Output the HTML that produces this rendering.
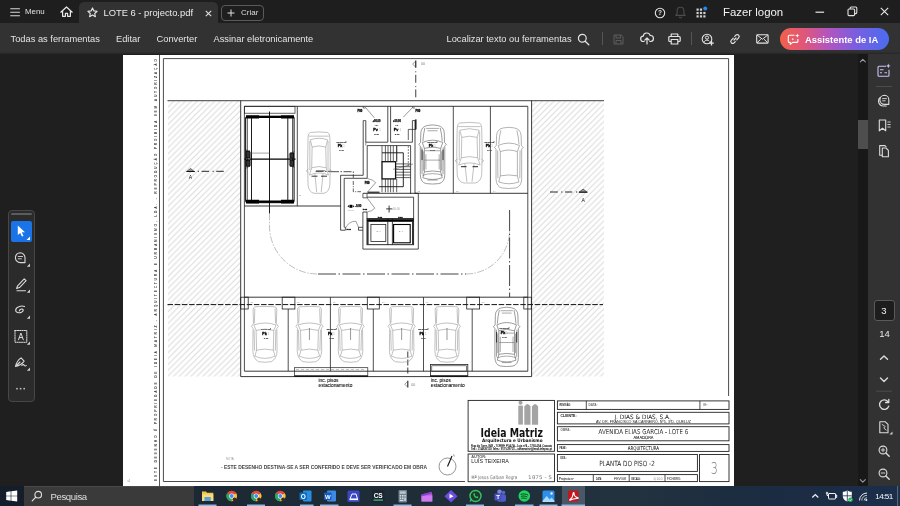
<!DOCTYPE html>
<html lang="pt"><head><meta charset="utf-8"><title>LOTE 6 - projecto.pdf</title>
<style>
*{box-sizing:border-box;margin:0;padding:0}
html,body{width:900px;height:506px;overflow:hidden;background:#1f1f1f;font-family:"Liberation Sans",sans-serif;color:#e6e6e6}
.abs{position:absolute}
#titlebar,#toolbar,#main,#taskbar{will-change:transform}
#titlebar{position:absolute;left:0;top:0;width:900px;height:23px;background:#1e1e1e}
#tab{position:absolute;left:79px;top:2px;width:139px;height:22px;background:#323232;border-radius:5px 5px 0 0}
#toolbar{position:absolute;left:0;top:23px;width:900px;height:31.5px;background:linear-gradient(180deg,#323232 0,#323232 28.5px,#242424 31.5px)}
#toolbar .t{position:absolute;top:10.5px;font-size:9.3px;color:#e4e4e4;white-space:nowrap;line-height:11px}
#main{position:absolute;left:0;top:54px;width:900px;height:432px;background:#1f1f1f}
#taskbar{position:absolute;left:0;top:486px;width:900px;height:20px;background:#1d2b3a}
svg{position:absolute;overflow:visible}
</style></head>
<body>
<div id="titlebar">
  <svg style="left:10px;top:7px" width="11" height="10" viewBox="0 0 11 10"><path d="M0.3 1.7h9.6M0.3 5.2h9.6M0.3 8.8h9.6" stroke="#d8d8d8" stroke-width="1.1" fill="none"/></svg>
  <div class="abs" style="left:25px;top:7.2px;font-size:7.9px;line-height:10px;color:#e0e0e0">Menu</div>
  <svg style="left:60px;top:6.4px" width="13" height="12" viewBox="0 0 13 12"><path d="M0.8 6.2L6.5 1l5.7 5.2M2.6 5v5.3h2.8V7.4h2.2v2.9h2.8V5" stroke="#e8e8e8" stroke-width="1.2" fill="none" stroke-linejoin="round" stroke-linecap="round"/></svg>
  <div id="tab"></div>
  <svg style="left:87px;top:7px" width="11" height="11" viewBox="0 0 11 11"><path d="M5.5 0.9l1.4 3 3.2.4-2.4 2.2.7 3.2-2.9-1.6-2.9 1.6.7-3.2L0.9 4.3l3.2-.4z" stroke="#e8e8e8" stroke-width="1.1" fill="none" stroke-linejoin="round"/></svg>
  <div class="abs" style="left:103.5px;top:6.5px;font-size:9.37px;line-height:12px;color:#ececec;white-space:nowrap">LOTE 6 - projecto.pdf</div>
  <svg style="left:204.5px;top:9.5px" width="7" height="7" viewBox="0 0 7 7"><path d="M0.8 0.8l5.4 5.4M6.2 0.8L0.8 6.2" stroke="#e0e0e0" stroke-width="1.1" fill="none"/></svg>
  <div class="abs" style="left:221px;top:5px;width:42.5px;height:15.5px;border:1px solid #5a5a5a;border-radius:4px"></div>
  <svg style="left:227px;top:9px" width="8" height="8" viewBox="0 0 8 8"><path d="M4 0.5v7M0.5 4h7" stroke="#e0e0e0" stroke-width="1" fill="none"/></svg>
  <div class="abs" style="left:241px;top:7.5px;font-size:8px;line-height:10px;color:#dcdcdc;white-space:nowrap">Criar</div>
  <!-- right icons -->
  <svg style="left:653.5px;top:6.5px" width="12" height="12" viewBox="0 0 12 12"><circle cx="6" cy="6" r="4.7" stroke="#e4e4e4" stroke-width="1.1" fill="none"/><text x="6" y="8.4" font-size="6.5" font-weight="bold" fill="#e4e4e4" text-anchor="middle" font-family="Liberation Sans, sans-serif">?</text></svg>
  <svg style="left:675px;top:6px" width="11" height="13" viewBox="0 0 11 13"><path d="M5.5 1.2c-2.2 0-3.4 1.7-3.4 3.8v2.6L1 9.4h9L8.9 7.6V5c0-2.1-1.2-3.8-3.4-3.800zM4.300 10.800a1.200 1.200 0 0 0 2.400 0" stroke="#4c4c4c" stroke-width="1.1" fill="none"/></svg>
  <svg style="left:696px;top:6px" width="12" height="12" viewBox="0 0 12 12"><g fill="#cfcfcf"><rect x="0.500" y="2.500" width="2.200" height="2.200"/><rect x="3.900" y="2.500" width="2.200" height="2.200"/><rect x="0.500" y="5.900" width="2.200" height="2.200"/><rect x="3.900" y="5.900" width="2.200" height="2.200"/><rect x="7.300" y="5.900" width="2.200" height="2.200"/><rect x="0.500" y="9.300" width="2.200" height="2.200"/><rect x="3.900" y="9.300" width="2.200" height="2.200"/><rect x="7.300" y="9.300" width="2.200" height="2.200"/></g><circle cx="9.2" cy="2.400" r="2" fill="#2a86f0"/></svg>
  <div class="abs" style="left:723px;top:5px;font-size:11.4px;line-height:14px;color:#f2f2f2;white-space:nowrap">Fazer logon</div>
  <svg style="left:815px;top:10.500px" width="10" height="3" viewBox="0 0 10 3"><path d="M0.500 1.200h8.600" stroke="#e8e8e8" stroke-width="1.200"/></svg>
  <svg style="left:847px;top:5.500px" width="11" height="11" viewBox="0 0 11 11"><rect x="1" y="3" width="6.600" height="6.600" rx="1" stroke="#e0e0e0" stroke-width="1.100" fill="none"/><path d="M3.200 3V2a1 1 0 0 1 1-1h4.600a1 1 0 0 1 1 1v4.600a1 1 0 0 1-1 1h-1" stroke="#e0e0e0" stroke-width="1.100" fill="none"/></svg>
  <svg style="left:880px;top:6.500px" width="9" height="9" viewBox="0 0 9 9"><path d="M0.800 0.800l7.400 7.400M8.200 0.800L0.800 8.200" stroke="#e8e8e8" stroke-width="1.100" fill="none"/></svg>
</div>
<div id="toolbar">
  <div class="t" style="left:10.500px">Todas as ferramentas</div>
  <div class="t" style="left:116px">Editar</div>
  <div class="t" style="left:156.500px">Converter</div>
  <div class="t" style="left:213.500px">Assinar eletronicamente</div>
  <div class="t" style="left:446.500px">Localizar texto ou ferramentas</div>
  <svg style="left:577px;top:10px" width="13" height="13" viewBox="0 0 13 13"><circle cx="5.300" cy="5.300" r="3.900" stroke="#e4e4e4" stroke-width="1.200" fill="none"/><path d="M8.200 8.200l3.600 3.600" stroke="#e4e4e4" stroke-width="1.300" stroke-linecap="round"/></svg>
  <div class="abs" style="left:601.500px;top:9px;width:1px;height:13px;background:#555"></div>
  <svg style="left:613px;top:10.500px" width="11" height="11" viewBox="0 0 11 11"><path d="M1 1h7.200L10 2.800V10H1zM3 1v3h4.500V1M3 10V6.500h5V10" stroke="#5c5c5c" stroke-width="1" fill="none" stroke-linejoin="round"/></svg>
  <svg style="left:640px;top:9px" width="14" height="13" viewBox="0 0 14 13"><path d="M4.200 9.500H3.500a2.700 2.700 0 0 1-.3-5.400A3.600 3.600 0 0 1 10.200 3.500a3 3 0 0 1 .5 6H9.800" stroke="#e4e4e4" stroke-width="1.200" fill="none" stroke-linecap="round"/><path d="M7 12V6.200M4.800 8.200L7 6l2.200 2.200" stroke="#e4e4e4" stroke-width="1.200" fill="none" stroke-linecap="round" stroke-linejoin="round"/></svg>
  <svg style="left:667.500px;top:9.500px" width="13" height="12" viewBox="0 0 13 12"><path d="M3.200 3.500V1h6.600v2.500M3.200 8.500H1.800a1 1 0 0 1-1-1V4.500a1 1 0 0 1 1-1h9.400a1 1 0 0 1 1 1v3a1 1 0 0 1-1 1H9.800M3.200 6.500h6.600V11H3.200z" stroke="#e4e4e4" stroke-width="1.200" fill="none" stroke-linejoin="round"/></svg>
  <div class="abs" style="left:690.500px;top:9px;width:1px;height:13px;background:#555"></div>
  <svg style="left:700.500px;top:9.500px" width="14" height="13" viewBox="0 0 14 13"><circle cx="6" cy="6" r="4.800" stroke="#e4e4e4" stroke-width="1.100" fill="none"/><circle cx="6" cy="4.600" r="1.600" stroke="#e4e4e4" stroke-width="1" fill="none"/><path d="M3.200 9.300c.4-1.500 1.500-2.200 2.800-2.200 1 0 1.800.4 2.300 1" stroke="#e4e4e4" stroke-width="1" fill="none"/><path d="M10.500 8v4.500M8.200 10.200h4.600" stroke="#e4e4e4" stroke-width="1.300"/></svg>
  <svg style="left:729px;top:10px" width="12" height="12" viewBox="0 0 12 12"><path d="M5 7L7 5M4.300 5.200L2.400 7.100a1.900 1.900 0 0 0 2.700 2.700l1.200-1.200M7.700 6.800l1.900-1.900a1.900 1.900 0 0 0-2.700-2.700L5.700 3.400" stroke="#e4e4e4" stroke-width="1.200" fill="none" stroke-linecap="round"/></svg>
  <svg style="left:756px;top:11px" width="13" height="10" viewBox="0 0 13 10"><rect x="0.700" y="0.700" width="11.400" height="8.400" rx="0.800" stroke="#e4e4e4" stroke-width="1.100" fill="none"/><path d="M1 1l5.400 4.200L11.800 1M1 8.800l3.800-3.600M11.800 8.800L8 5.200" stroke="#e4e4e4" stroke-width="1" fill="none"/></svg>
  <div class="abs" style="left:780px;top:5px;width:108.500px;height:22px;border-radius:11px;background:linear-gradient(90deg,#f2604a 0%,#e0567a 22%,#b055c0 45%,#7a5ee0 70%,#4a6cf0 100%)"></div>
  <svg style="left:787px;top:9.500px" width="13" height="13" viewBox="0 0 13 13"><path d="M7.500 2.200H2.500a1.200 1.200 0 0 0-1.200 1.200v4.800a1.200 1.200 0 0 0 1.200 1.200h.8v2l2.400-2h4a1.200 1.200 0 0 0 1.200-1.200V6" stroke="#fff" stroke-width="1.100" fill="none" stroke-linejoin="round"/><path d="M10.300 0.600l.6 1.500 1.500.6-1.500.6-.6 1.500-.6-1.500-1.500-.6 1.500-.6z" fill="#fff"/><path d="M5.800 4.800l.4 1 .9.400-.9.400-.4 1-.4-1-.9-.4.900-.4z" fill="#fff"/></svg>
  <div class="abs" style="left:805px;top:10.500px;font-size:9.42px;line-height:11px;font-weight:bold;color:#fff;white-space:nowrap">Assistente de IA</div>
</div>
<div id="main">
<!--PAGE_START-->
<svg style="left:123px;top:1px;overflow:hidden" width="611" height="431" viewBox="123 55 611 431">
<defs><pattern id="hat" width="5.85" height="5.85" patternUnits="userSpaceOnUse"><path d="M-1 6.850L6.850 -1M-1 1L1 -1M4.850 6.850L6.850 4.850" stroke="#dcdcdc" stroke-width="1.100"/></pattern></defs>
<rect x="123" y="55" width="611" height="431" fill="#fff"/>
<rect x="168" y="101" width="72.500" height="275.500" fill="url(#hat)"/>
<rect x="532" y="101" width="72" height="275.500" fill="url(#hat)"/>
<path d="M159.5 55L159.5 486" stroke="#444" stroke-width="0.9" />
<path d="M465 481.5L163.4 481.5L163.4 58.6L728.6 58.6L728.6 396" stroke="#4a4a4a" stroke-width="1" fill="none" />
<text transform="translate(157.300 481) rotate(-90)" font-size="3.400" font-weight="bold" fill="#3a3a3a" font-family="Liberation Sans, sans-serif" textLength="422" lengthAdjust="spacing">ESTE DESENHO É PROPRIEDADE DE IDEIA MATRIZ - ARQUITECTURA E URBANISMO, LDA. - REPRODUÇÃO PROIBIDA SEM AUTORIZAÇÃO</text>
<text x="127.5" y="481.5" font-size="2.6" fill="#777" text-anchor="start" font-weight="normal" font-family="Liberation Sans, sans-serif" >v1</text>
<path d="M415.75 60.4L415.75 67.8" stroke="#222" stroke-width="1.2" />
<path d="M415.300 61.300l-2.600 2.800 2.600 2.800" stroke="#555" stroke-width="0.600" fill="none"/>
<text x="420.9" y="65.3" font-size="3.6" fill="#777" text-anchor="start" font-weight="normal" font-family="Liberation Sans, sans-serif" >00</text>
<path d="M415.750 71.300v1M415.750 74.800v7.900M415.750 86.100v1M415.750 89.400v7.900" stroke="#333" stroke-width="0.950"/>
<path d="M167.5 100.6L604 100.6" stroke="#666" stroke-width="1.3" />
<path d="M240.7 100.6L240.7 376.6L531.6 376.6L531.6 100.6" stroke="#222" stroke-width="0.9" fill="none" />
<path d="M244.4 106.3L527.8 106.3" stroke="#222" stroke-width="0.9" />
<path d="M244.4 106.3L244.4 371.2" stroke="#222" stroke-width="0.8" />
<path d="M527.8 106.3L527.8 371.2" stroke="#222" stroke-width="0.8" />
<path d="M244.4 371.2L527.8 371.2" stroke="#222" stroke-width="0.9" />
<rect x="244.6" y="106.3" width="50.4" height="6.9" stroke="#222" stroke-width="0.7" fill="none" />
<rect x="245.600" y="116.400" width="48.500" height="86.300" rx="1.500" stroke="#111" stroke-width="1" fill="none"/>
<path d="M246 115.300h13v0.500h22v-0.500h13v3.300h-13v-0.600h-22v0.600h-13z" fill="#000"/>
<path d="M246 199.800h13v0.700h22v-0.700h13v3.600h-13v-0.600h-22v0.600h-13z" fill="#000"/>
<path d="M251.5 118L251.5 200.5" stroke="#111" stroke-width="0.95" />
<path d="M287.8 118L287.8 200.5" stroke="#111" stroke-width="0.95" />
<path d="M247.3 118L247.3 200.5" stroke="#222" stroke-width="0.8" />
<path d="M292.6 118L292.6 200.5" stroke="#222" stroke-width="0.8" />
<path d="M269.5 111.5L269.5 213.5" stroke="#000" stroke-width="0.9" />
<path d="M244.5 159.1L295.5 159.1" stroke="#000" stroke-width="1.3" />
<path d="M251.5 153.1L269.5 153.1" stroke="#666" stroke-width="0.6" />
<g stroke="#000" stroke-width="0.800" fill="#333"><rect x="246.300" y="151" width="3.400" height="6.800"/><rect x="246.300" y="160.400" width="3.400" height="5.800"/><rect x="290.200" y="153" width="3.400" height="5.200"/><rect x="290.200" y="160.200" width="3.400" height="6"/></g>
<path d="M245.600 149.500l5 3v13l-5 3M294.200 151.500l-5 2.500v11l5 2.500" stroke="#222" stroke-width="0.600" fill="none"/>
<path d="M297.3 106.3L297.3 206" stroke="#222" stroke-width="0.8" />
<path d="M244.4 206L341 206" stroke="#222" stroke-width="0.9" />
<text x="299" y="195.5" font-size="2.2" fill="#888" text-anchor="start" font-weight="normal" font-family="Liberation Sans, sans-serif" >11</text>
<path d="M269.500 213.300V226A48 48 0 0 0 317.500 274" stroke="#8a8a8a" stroke-width="0.550" fill="none" stroke-dasharray="7 1.500 1.500 1.500"/>
<path d="M318 274H466" stroke="#222" stroke-width="0.850" fill="none" stroke-dasharray="18 2.500 1.500 2.500"/>
<path d="M466 274A43.600 43.600 0 0 0 509.600 230.400" stroke="#8a8a8a" stroke-width="0.550" fill="none" stroke-dasharray="7 1.500 1.500 1.500"/>
<path d="M509.6 210L509.6 297" stroke="#222" stroke-width="0.85" stroke-dasharray="21 2.500 1.500 2.500"/>
<path d="M453.3 106.3L453.3 193.3" stroke="#222" stroke-width="0.8" />
<path d="M490.4 106.3L490.4 193.3" stroke="#222" stroke-width="0.8" />
<path d="M415 193.3L527.8 193.3" stroke="#222" stroke-width="0.9" fill="none" />
<path d="M415 120.6L415 194" stroke="#222" stroke-width="0.8" />
<text x="417.5" y="192" font-size="2.2" fill="#888" text-anchor="start" font-weight="normal" font-family="Liberation Sans, sans-serif" >12</text>
<text x="456" y="192" font-size="2.2" fill="#888" text-anchor="start" font-weight="normal" font-family="Liberation Sans, sans-serif" >13</text>
<text x="493" y="192" font-size="2.2" fill="#888" text-anchor="start" font-weight="normal" font-family="Liberation Sans, sans-serif" >14</text>
<path d="M363.2 120.6L363.2 175.3L340.6 175.3L340.6 230.2" stroke="#222" stroke-width="0.8" fill="none" />
<path d="M365.8 120.6L365.8 142.2L387.8 142.2L387.8 106.3" stroke="#222" stroke-width="0.8" fill="none" />
<path d="M363.2 120.6L365.8 120.6" stroke="#222" stroke-width="0.7" />
<path d="M390.6 106.3L390.6 142.2L412.4 142.2L412.4 120.6L415 120.6" stroke="#222" stroke-width="0.8" fill="none" />
<path d="M363.2 106.3L363.2 108L365.5 108" stroke="#222" stroke-width="0.6" fill="none" />
<path d="M365.3 107.2L374.4 117.8" stroke="#555" stroke-width="0.6" />
<path d="M412.8 106.3L412.8 108L415 108" stroke="#222" stroke-width="0.6" fill="none" />
<path d="M412.8 107.2L403.3 117.2" stroke="#555" stroke-width="0.6" />
<text x="357.5" y="111.6" font-size="2.7" fill="#111" text-anchor="start" font-weight="bold" font-family="Liberation Sans, sans-serif" stroke="#111" stroke-width="0.3" >P00</text>
<text x="415.5" y="111.6" font-size="2.7" fill="#111" text-anchor="start" font-weight="bold" font-family="Liberation Sans, sans-serif" stroke="#111" stroke-width="0.3" >P00</text>
<rect x="415.100" y="119.400" width="1.400" height="10" fill="#111"/>
<path d="M416 129.4L408.3 129.4L408.3 140" stroke="#222" stroke-width="0.7" fill="none" />
<text x="376.5" y="121.5" font-size="2.6" fill="#222" text-anchor="middle" font-weight="bold" font-family="Liberation Sans, sans-serif" stroke="#222" stroke-width="0.25" >+00.00</text>
<text x="376.5" y="125.5" font-size="2.4" fill="#444" text-anchor="middle" font-weight="normal" font-family="Liberation Sans, sans-serif" stroke="#444" stroke-width="0.15" >I.S.</text>
<text x="375.5" y="130.5" font-size="3.8" fill="#000" text-anchor="middle" font-weight="bold" font-family="Liberation Sans, sans-serif" stroke="#000" stroke-width="0.3" >Pv</text>
<text x="380.0" y="130.5" font-size="2.6" fill="#999" text-anchor="middle" font-weight="normal" font-family="Liberation Sans, sans-serif" >1</text>
<text x="376.5" y="135.0" font-size="2.3" fill="#333" text-anchor="middle" font-weight="normal" font-family="Liberation Sans, sans-serif" stroke="#333" stroke-width="0.2" >2.40</text>
<text x="397" y="121.5" font-size="2.6" fill="#222" text-anchor="middle" font-weight="bold" font-family="Liberation Sans, sans-serif" stroke="#222" stroke-width="0.25" >+00.00</text>
<text x="397" y="125.5" font-size="2.4" fill="#444" text-anchor="middle" font-weight="normal" font-family="Liberation Sans, sans-serif" stroke="#444" stroke-width="0.15" >I.S.</text>
<text x="396" y="130.5" font-size="3.8" fill="#000" text-anchor="middle" font-weight="bold" font-family="Liberation Sans, sans-serif" stroke="#000" stroke-width="0.3" >Pv</text>
<text x="400.5" y="130.5" font-size="2.6" fill="#999" text-anchor="middle" font-weight="normal" font-family="Liberation Sans, sans-serif" >1</text>
<text x="397" y="135.0" font-size="2.3" fill="#333" text-anchor="middle" font-weight="normal" font-family="Liberation Sans, sans-serif" stroke="#333" stroke-width="0.2" >2.40</text>
<text x="341.5" y="142.6" font-size="2.5" fill="#333" text-anchor="middle" font-weight="normal" font-family="Liberation Sans, sans-serif" stroke="#333" stroke-width="0.2" >00.00 m²</text>
<text x="340.0" y="147.4" font-size="3.6" fill="#000" text-anchor="middle" font-weight="bold" font-family="Liberation Sans, sans-serif" stroke="#000" stroke-width="0.3" >Pk</text>
<text x="344.0" y="147.4" font-size="2.6" fill="#999" text-anchor="middle" font-weight="normal" font-family="Liberation Sans, sans-serif" >1</text>
<text x="341.5" y="151.4" font-size="2.2" fill="#444" text-anchor="middle" font-weight="normal" font-family="Liberation Sans, sans-serif" stroke="#444" stroke-width="0.2" >2.40</text>
<text x="432.5" y="142.6" font-size="2.5" fill="#333" text-anchor="middle" font-weight="normal" font-family="Liberation Sans, sans-serif" stroke="#333" stroke-width="0.2" >00.00 m²</text>
<text x="431.0" y="147.4" font-size="3.6" fill="#000" text-anchor="middle" font-weight="bold" font-family="Liberation Sans, sans-serif" stroke="#000" stroke-width="0.3" >Pk</text>
<text x="435.0" y="147.4" font-size="2.6" fill="#999" text-anchor="middle" font-weight="normal" font-family="Liberation Sans, sans-serif" >1</text>
<text x="432.5" y="151.4" font-size="2.2" fill="#444" text-anchor="middle" font-weight="normal" font-family="Liberation Sans, sans-serif" stroke="#444" stroke-width="0.2" >2.40</text>
<text x="489.5" y="142.6" font-size="2.5" fill="#333" text-anchor="middle" font-weight="normal" font-family="Liberation Sans, sans-serif" stroke="#333" stroke-width="0.2" >00.00 m²</text>
<text x="488.0" y="147.4" font-size="3.6" fill="#000" text-anchor="middle" font-weight="bold" font-family="Liberation Sans, sans-serif" stroke="#000" stroke-width="0.3" >Pk</text>
<text x="492.0" y="147.4" font-size="2.6" fill="#999" text-anchor="middle" font-weight="normal" font-family="Liberation Sans, sans-serif" >1</text>
<text x="489.5" y="151.4" font-size="2.2" fill="#444" text-anchor="middle" font-weight="normal" font-family="Liberation Sans, sans-serif" stroke="#444" stroke-width="0.2" >2.40</text>
<path d="M367.2 178.3L367.2 145.6L410.6 145.6L410.6 194" stroke="#222" stroke-width="0.8" fill="none" />
<path d="M365.8 142.2L365.8 145.6" stroke="#222" stroke-width="0.5" />
<rect x="382" y="161.7" width="13.6" height="17.2" stroke="#111" stroke-width="1.3" fill="none" />
<path d="M382 145.6L382 161.7" stroke="#222" stroke-width="0.7" />
<path d="M382 178.9L382 192.2" stroke="#222" stroke-width="0.7" />
<path d="M385.4 145.6L385.4 161.7" stroke="#222" stroke-width="0.7" />
<path d="M385.4 178.9L385.4 192.2" stroke="#222" stroke-width="0.7" />
<path d="M388 145.6L388 161.7" stroke="#222" stroke-width="0.7" />
<path d="M388 178.9L388 192.2" stroke="#222" stroke-width="0.7" />
<path d="M390.6 145.6L390.6 161.7" stroke="#222" stroke-width="0.7" />
<path d="M390.6 178.9L390.6 192.2" stroke="#222" stroke-width="0.7" />
<path d="M393.3 145.6L393.3 161.7" stroke="#222" stroke-width="0.7" />
<path d="M393.3 178.9L393.3 192.2" stroke="#222" stroke-width="0.7" />
<path d="M396.7 145.6L396.7 161.7" stroke="#222" stroke-width="0.7" />
<path d="M396.7 178.9L396.7 192.2" stroke="#222" stroke-width="0.7" />
<path d="M395.6 163.9L410.6 163.9" stroke="#222" stroke-width="0.7" />
<path d="M395.6 166.7L410.6 166.7" stroke="#222" stroke-width="0.7" />
<path d="M395.6 169.4L410.6 169.4" stroke="#222" stroke-width="0.7" />
<path d="M395.6 172.2L410.6 172.2" stroke="#222" stroke-width="0.7" />
<path d="M395.6 175L410.6 175" stroke="#222" stroke-width="0.7" />
<path d="M395.6 177.6L410.6 177.6" stroke="#222" stroke-width="0.7" />
<path d="M382 152.8L403.3 152.8L403.3 186.7L378.9 186.7" stroke="#111" stroke-width="0.9" fill="none" />
<path d="M396.7 145.6L396.7 161.7" stroke="#222" stroke-width="0.7" />
<path d="M393 169.4L413 164" stroke="#444" stroke-width="0.5" />
<path d="M408.3 146L408.3 166" stroke="#333" stroke-width="0.6" stroke-dasharray="2 1"/>
<path d="M367.2 178.3L344.2 178.3L344.2 227.3" stroke="#222" stroke-width="0.8" fill="none" />
<path d="M331 171.700H353.300V177.800" stroke="#222" stroke-width="0.800" fill="none" stroke-dasharray="8 1.500 1.500 1.500"/>
<path d="M315.6 171.3L331 171.3" stroke="#222" stroke-width="0.9" stroke-dasharray="8 1.500 1.500 1.500"/>
<path d="M353.300 181V191.700H361" stroke="#222" stroke-width="0.700" fill="none" stroke-dasharray="4 1.200 1 1.200"/>
<path d="M375.7 182.6L367.6 192" stroke="#555" stroke-width="0.6" />
<path d="M367.400 178.500Q373 179.500 375.700 182.600" stroke="#555" stroke-width="0.550" fill="none"/>
<text x="364.8" y="183.6" font-size="2.6" fill="#111" text-anchor="start" font-weight="bold" font-family="Liberation Sans, sans-serif" stroke="#111" stroke-width="0.3" >P00</text>
<rect x="367.500" y="191.600" width="12" height="1.300" fill="#333"/>
<path d="M362.9 193.3L362.9 197.8L367 197.8L367 193.3" stroke="#222" stroke-width="0.7" fill="none" />
<path d="M363 193.3L415 193.3" stroke="#222" stroke-width="0.9" />
<path d="M418.3 193.3L418.3 249.1L362.9 249.1L362.9 212L367 212L367 218.6" stroke="#222" stroke-width="0.8" fill="none" />
<path d="M413.6 218.6L413.6 197.2L367 197.2" stroke="#222" stroke-width="0.8" fill="none" />
<path d="M415 193.3L418.3 193.3" stroke="#222" stroke-width="0.9" />
<path d="M367 197.8L374.8 208.2" stroke="#555" stroke-width="0.6" />
<path d="M374.800 208.200Q372 211.500 367 212" stroke="#555" stroke-width="0.550" fill="none"/>
<text x="362.8" y="210" font-size="2.5" fill="#111" text-anchor="start" font-weight="bold" font-family="Liberation Sans, sans-serif" stroke="#111" stroke-width="0.3" >P00</text>
<rect x="367" y="219.200" width="46.600" height="2.600" fill="#000"/>
<rect x="367" y="218.6" width="46.6" height="26.1" stroke="#111" stroke-width="0.9" fill="none" />
<rect x="367" y="222" width="1.600" height="22.500" fill="#333"/><rect x="412" y="222" width="1.600" height="22.500" fill="#333"/>
<path d="M387.8 218.6L387.8 244.7" stroke="#111" stroke-width="0.8" />
<path d="M392.4 218.6L392.4 244.7" stroke="#111" stroke-width="0.8" />
<rect x="370.9" y="224.5" width="14.9" height="17.0" stroke="#222" stroke-width="0.8" fill="none" />
<rect x="393.6" y="224.5" width="16.6" height="18.3" stroke="#000" stroke-width="1.1" fill="none" />
<text x="378.7" y="231.6" font-size="2.5" fill="#8a8a8a" text-anchor="middle" font-weight="normal" font-family="Liberation Sans, sans-serif" >E. F</text>
<text x="401" y="231.6" font-size="2.5" fill="#8a8a8a" text-anchor="middle" font-weight="normal" font-family="Liberation Sans, sans-serif" >E. F</text>
<text x="380" y="217.8" font-size="2.5" fill="#111" text-anchor="middle" font-weight="bold" font-family="Liberation Sans, sans-serif" stroke="#111" stroke-width="0.3" >P00</text>
<text x="400.5" y="217.8" font-size="2.5" fill="#111" text-anchor="middle" font-weight="bold" font-family="Liberation Sans, sans-serif" stroke="#111" stroke-width="0.3" >P00</text>
<path d="M386.2 208.9L392.4 208.9" stroke="#222" stroke-width="0.9" />
<path d="M389.1 205.6L389.1 212.5" stroke="#222" stroke-width="0.9" />
<text x="392.8" y="209.6" font-size="2.8" fill="#999" text-anchor="start" font-weight="normal" font-family="Liberation Sans, sans-serif" >00.00</text>
<path d="M340.6 230.2L345.4 230.2" stroke="#222" stroke-width="0.8" fill="none" />
<path d="M344.4 227.3L345.4 227.3" stroke="#222" stroke-width="0.7" />
<path d="M345.4 227.3L345.4 230.2" stroke="#222" stroke-width="0.7" />
<path d="M362.9 227.3L358.5 227.3L358.5 230.2L362.9 230.2" stroke="#222" stroke-width="0.8" fill="none" />
<path d="M345.400 228.500A10.800 10.800 0 0 1 355.900 221.200" stroke="#555" stroke-width="0.550" fill="none"/>
<path d="M355.9 221.2L358.5 227.3" stroke="#555" stroke-width="0.55" />
<text x="346.5" y="230.2" font-size="2.5" fill="#111" text-anchor="start" font-weight="bold" font-family="Liberation Sans, sans-serif" stroke="#111" stroke-width="0.3" >P00</text>
<path d="M347.400 206.300l1.800-1.300v2.600zM352.700 205v2.600l1.800-1.300z" fill="#111"/><rect x="349.500" y="204.800" width="2.800" height="3" fill="#000"/>
<text x="355" y="207.3" font-size="2.8" fill="#111" text-anchor="start" font-weight="bold" font-family="Liberation Sans, sans-serif" stroke="#111" stroke-width="0.25" >-0.00</text>
<text x="348" y="211.2" font-size="2.3" fill="#888" text-anchor="start" font-weight="normal" font-family="Liberation Sans, sans-serif" >00.00</text>
<path d="M244.4 297.2L527.8 297.2" stroke="#222" stroke-width="0.9" />
<path d="M167.500 304.600H603" stroke="#111" stroke-width="1" stroke-dasharray="5.500 1.700"/>
<rect x="240.7" y="297.2" width="7.5" height="11.8" stroke="#222" stroke-width="0.8" fill="none" />
<rect x="282.2" y="297.2" width="12.7" height="11.8" stroke="#222" stroke-width="0.8" fill="none" />
<rect x="367.3" y="297.2" width="12.0" height="11.8" stroke="#222" stroke-width="0.8" fill="none" />
<rect x="466.7" y="297.2" width="12.9" height="11.8" stroke="#222" stroke-width="0.8" fill="none" />
<rect x="523.8" y="297.2" width="7.5" height="11.8" stroke="#222" stroke-width="0.8" fill="none" />
<path d="M288.2 309L288.2 371.2" stroke="#222" stroke-width="0.8" />
<path d="M330.4 297.2L330.4 371.2" stroke="#222" stroke-width="0.8" />
<path d="M373.3 309L373.3 371.2" stroke="#222" stroke-width="0.8" />
<path d="M423.5 297.2L423.5 371.2" stroke="#222" stroke-width="0.8" />
<path d="M472.2 309L472.2 371.2" stroke="#222" stroke-width="0.8" />
<text x="250.5" y="302.5" font-size="2.2" fill="#888" text-anchor="start" font-weight="normal" font-family="Liberation Sans, sans-serif" >15</text>
<text x="297" y="302.5" font-size="2.2" fill="#888" text-anchor="start" font-weight="normal" font-family="Liberation Sans, sans-serif" >16</text>
<text x="333" y="302.5" font-size="2.2" fill="#888" text-anchor="start" font-weight="normal" font-family="Liberation Sans, sans-serif" >17</text>
<text x="382" y="302.5" font-size="2.2" fill="#888" text-anchor="start" font-weight="normal" font-family="Liberation Sans, sans-serif" >18</text>
<text x="426" y="302.5" font-size="2.2" fill="#888" text-anchor="start" font-weight="normal" font-family="Liberation Sans, sans-serif" >19</text>
<text x="482" y="302.5" font-size="2.2" fill="#888" text-anchor="start" font-weight="normal" font-family="Liberation Sans, sans-serif" >20</text>
<rect x="294.4" y="367.7" width="73.4" height="8.7" stroke="#222" stroke-width="0.7" fill="none" />
<rect x="294.400" y="375.300" width="73.400" height="1.600" fill="#111"/>
<path d="M296 369.500h70" stroke="#888" stroke-width="0.500" stroke-dasharray="3 2"/>
<rect x="430.4" y="364.4" width="37.4" height="11.8" stroke="#222" stroke-width="0.8" fill="none" />
<rect x="431.8" y="365.8" width="34.6" height="5.4" stroke="#222" stroke-width="0.6" fill="none" />
<rect x="430.400" y="375.300" width="37.400" height="1.600" fill="#111"/>
<text x="318.5" y="382.2" font-size="4.8" fill="#111" text-anchor="start" font-weight="normal" font-family="Liberation Sans, sans-serif" stroke="#111" stroke-width="0.08" >inc. pisos</text>
<text x="318.5" y="386.6" font-size="4.8" fill="#111" text-anchor="start" font-weight="normal" font-family="Liberation Sans, sans-serif" stroke="#111" stroke-width="0.08" >estacionamento</text>
<text x="430.8" y="382.2" font-size="4.8" fill="#111" text-anchor="start" font-weight="normal" font-family="Liberation Sans, sans-serif" stroke="#111" stroke-width="0.08" >inc. pisos</text>
<text x="430.8" y="386.6" font-size="4.8" fill="#111" text-anchor="start" font-weight="normal" font-family="Liberation Sans, sans-serif" stroke="#111" stroke-width="0.08" >estacionamento</text>
<text x="266" y="330.3" font-size="2.5" fill="#333" text-anchor="middle" font-weight="normal" font-family="Liberation Sans, sans-serif" stroke="#333" stroke-width="0.2" >00.00 m²</text>
<text x="264.5" y="335.1" font-size="3.6" fill="#000" text-anchor="middle" font-weight="bold" font-family="Liberation Sans, sans-serif" stroke="#000" stroke-width="0.3" >Pk</text>
<text x="268.5" y="335.1" font-size="2.6" fill="#999" text-anchor="middle" font-weight="normal" font-family="Liberation Sans, sans-serif" >1</text>
<text x="266" y="339.1" font-size="2.2" fill="#444" text-anchor="middle" font-weight="normal" font-family="Liberation Sans, sans-serif" stroke="#444" stroke-width="0.2" >2.40</text>
<text x="331.6" y="330.3" font-size="2.5" fill="#333" text-anchor="middle" font-weight="normal" font-family="Liberation Sans, sans-serif" stroke="#333" stroke-width="0.2" >00.00 m²</text>
<text x="330.1" y="335.1" font-size="3.6" fill="#000" text-anchor="middle" font-weight="bold" font-family="Liberation Sans, sans-serif" stroke="#000" stroke-width="0.3" >Pk</text>
<text x="334.1" y="335.1" font-size="2.6" fill="#999" text-anchor="middle" font-weight="normal" font-family="Liberation Sans, sans-serif" >1</text>
<text x="331.6" y="339.1" font-size="2.2" fill="#444" text-anchor="middle" font-weight="normal" font-family="Liberation Sans, sans-serif" stroke="#444" stroke-width="0.2" >2.40</text>
<text x="423.3" y="330.3" font-size="2.5" fill="#333" text-anchor="middle" font-weight="normal" font-family="Liberation Sans, sans-serif" stroke="#333" stroke-width="0.2" >00.00 m²</text>
<text x="421.8" y="335.1" font-size="3.6" fill="#000" text-anchor="middle" font-weight="bold" font-family="Liberation Sans, sans-serif" stroke="#000" stroke-width="0.3" >Pk</text>
<text x="425.8" y="335.1" font-size="2.6" fill="#999" text-anchor="middle" font-weight="normal" font-family="Liberation Sans, sans-serif" >1</text>
<text x="423.3" y="339.1" font-size="2.2" fill="#444" text-anchor="middle" font-weight="normal" font-family="Liberation Sans, sans-serif" stroke="#444" stroke-width="0.2" >2.40</text>
<text x="504.5" y="329" font-size="2.5" fill="#333" text-anchor="middle" font-weight="normal" font-family="Liberation Sans, sans-serif" stroke="#333" stroke-width="0.2" >00.00 m²</text>
<text x="503.0" y="333.8" font-size="3.6" fill="#000" text-anchor="middle" font-weight="bold" font-family="Liberation Sans, sans-serif" stroke="#000" stroke-width="0.3" >Pk</text>
<text x="507.0" y="333.8" font-size="2.6" fill="#999" text-anchor="middle" font-weight="normal" font-family="Liberation Sans, sans-serif" >1</text>
<text x="504.5" y="337.8" font-size="2.2" fill="#444" text-anchor="middle" font-weight="normal" font-family="Liberation Sans, sans-serif" stroke="#444" stroke-width="0.2" >2.40</text>
<path d="M407.8 380.8L407.8 387.6" stroke="#222" stroke-width="1.1" />
<path d="M407.300 381.500l-2.500 2.700 2.500 2.700" stroke="#555" stroke-width="0.600" fill="none"/>
<text x="411.3" y="385.6" font-size="3.6" fill="#777" text-anchor="start" font-weight="normal" font-family="Liberation Sans, sans-serif" >00</text>
<path d="M407.8 351.5L407.8 375" stroke="#222" stroke-width="0.9" stroke-dasharray="6 2"/>
<path d="M186.700 171.500l3.800-3 3.800 3z" stroke="#222" stroke-width="0.600" fill="#999"/>
<path d="M186.5 171.5L194.8 171.5" stroke="#111" stroke-width="1" />
<path d="M197.800 171.300h1.200M201.600 171.300h7.500M212.500 171.300h1.200M216.200 171.300h7.600" stroke="#111" stroke-width="0.900"/>
<text x="190.400" y="178.700" font-size="6" fill="#222" text-anchor="middle" font-family="Liberation Sans, sans-serif" textLength="3.400" lengthAdjust="spacingAndGlyphs">A</text>
<path d="M579 192.200l4.100-3.100 4.100 3.100z" stroke="#222" stroke-width="0.600" fill="#999"/>
<path d="M578.8 192.2L587.4 192.2" stroke="#111" stroke-width="1" />
<path d="M550 192h7.800M561.200 192h1.200M565 192h7.300M576 192h1.200" stroke="#111" stroke-width="0.900"/>
<text x="583.300" y="201.700" font-size="6" fill="#222" text-anchor="middle" font-family="Liberation Sans, sans-serif" textLength="3.400" lengthAdjust="spacingAndGlyphs">A</text>
<g stroke="#8e8e8e" stroke-width="0.55" fill="none" stroke-linejoin="round"><path d="M310.32 132.5Q318.95 131.28 327.58 132.5Q329.85 133.11 329.85 137.36L330.3 162.9L329.85 184.79Q329.17 192.08 323.94 193.3L313.96 193.3Q308.74 192.08 308.05 184.79L307.6 162.9L308.05 137.36Q308.05 133.11 310.32 132.5z"/><path d="M310.32 139.8Q318.95 136.76 327.58 139.8L325.76 147.09Q318.95 144.66 312.14 147.09z"/><path d="M312.14 147.09L311.69 167.76M325.76 147.09L326.21 167.76"/><path d="M309.87 141.01L309.87 170.2M328.03 141.01L328.03 170.2"/><path d="M311.69 167.76Q318.95 165.33 326.21 167.76L328.48 175.06Q318.95 170.8 309.42 175.06z"/><path d="M314.86 173.84L316.68 192.08M323.04 173.84L321.22 192.08"/><path d="M308.96 136.15L328.94 136.15"/><path d="M308.28 168.98L306.24 170.8L308.05 172.63M329.62 168.98L331.66 170.8L329.85 172.63"/></g>
<path d="M311.500 176.200h6M321 176.200h6" stroke="#222" stroke-width="0.900"/><path d="M316 170.800h9" stroke="#444" stroke-width="0.700"/>
<g stroke="#666" stroke-width="0.65" fill="none" stroke-linejoin="round"><path d="M427.45 125.49Q432.55 124.31 437.65 125.49Q444.03 126.66 444.28 133.12L444.54 142.51L446.32 144.27L444.79 146.03L444.79 174.79Q444.54 182.43 438.93 183.6Q432.55 184.48 426.18 183.6Q420.56 182.43 420.31 174.79L420.31 146.03L418.78 144.27L420.56 142.51L420.82 133.12Q421.07 126.66 427.45 125.49z"/><path d="M422.35 142.51Q432.55 137.81 442.75 142.51L440.71 148.38Q432.55 145.44 424.39 148.38z"/><path d="M424.39 148.38L424.39 171.86M440.71 148.38L440.71 171.86M421.84 147.21L422.1 174.21M443.26 147.21L443.0 174.21"/><path d="M424.39 171.86Q432.55 170.1 440.71 171.86L442.24 177.73Q432.55 181.25 422.86 177.73z"/><path d="M424.9 127.84Q423.37 133.71 422.86 141.34M440.2 127.84Q441.73 133.71 442.24 141.34"/><path d="M426.18 128.42L438.93 128.42M427.45 130.77L437.65 130.77M424.9 150.73L440.2 150.73M425.92 154.25L425.92 169.51M439.18 154.25L439.18 169.51M423.37 151.31L423.37 170.69M441.73 151.31L441.73 170.69M422.35 175.38Q432.55 171.86 442.75 175.38M427.45 180.08L437.65 180.08M424.9 160.12L440.2 160.12" stroke="#555" stroke-width="0.500"/><path d="M422.1 149.55L422.1 160.12M443.0 149.55L443.0 160.12" stroke="#222" stroke-width="0.900"/></g>
<g stroke="#8e8e8e" stroke-width="0.55" fill="none" stroke-linejoin="round"><path d="M459.76 123.0Q469.45 121.8 479.14 123.0Q481.69 123.6 481.69 127.8L482.2 153.0L481.69 174.6Q480.93 181.8 475.06 183.0L463.84 183.0Q457.97 181.8 457.21 174.6L456.7 153.0L457.21 127.8Q457.21 123.6 459.76 123.0z"/><path d="M459.76 130.2Q469.45 127.2 479.14 130.2L477.1 137.4Q469.45 135.0 461.8 137.4z"/><path d="M461.8 137.4L461.29 157.8M477.1 137.4L477.61 157.8"/><path d="M459.25 131.4L459.25 160.2M479.65 131.4L479.65 160.2"/><path d="M461.29 157.8Q469.45 155.4 477.61 157.8L480.16 165.0Q469.45 160.8 458.74 165.0z"/><path d="M464.86 163.8L466.9 181.8M474.04 163.8L472.0 181.8"/><path d="M458.23 126.6L480.67 126.6"/><path d="M457.46 159.0L455.17 160.8L457.21 162.6M481.44 159.0L483.73 160.8L481.69 162.6"/></g>
<path d="M461 166.700h5.500M472.500 166.700h5.500" stroke="#222" stroke-width="1"/>
<g stroke="#808080" stroke-width="0.6" fill="none" stroke-linejoin="round"><path d="M503.51 127.91Q508.85 126.69 514.19 127.91Q520.87 129.12 521.13 135.8L521.4 145.51L523.27 147.33L521.67 149.15L521.67 178.89Q521.4 186.79 515.53 188.0Q508.85 188.91 502.18 188.0Q496.3 186.79 496.03 178.89L496.03 149.15L494.43 147.33L496.3 145.51L496.57 135.8Q496.83 129.12 503.51 127.91z"/><path d="M498.17 145.51Q508.85 140.65 519.53 145.51L517.39 151.58Q508.85 148.54 500.31 151.58z"/><path d="M500.31 151.58L500.31 175.86M517.39 151.58L517.39 175.86M497.64 150.37L497.9 178.29M520.06 150.37L519.8 178.29"/><path d="M500.31 175.86Q508.85 174.04 517.39 175.86L519.0 181.93Q508.85 185.57 498.7 181.93z"/><path d="M500.84 130.34Q499.24 136.41 498.7 144.3M516.86 130.34Q518.46 136.41 519.0 144.3"/></g>
<g stroke="#8e8e8e" stroke-width="0.55" fill="none" stroke-linejoin="round"><path d="M254.83 306.8Q264.95 305.98 275.07 306.8Q276.84 307.35 276.84 310.09L276.34 323.27L278.36 326.56L276.84 328.21L277.09 350.72Q276.84 358.95 271.28 361.7Q264.95 362.8 258.62 361.7Q253.06 358.95 252.81 350.72L253.06 328.21L251.54 326.56L253.56 323.27L253.06 310.09Q253.06 307.35 254.83 306.8z"/><path d="M253.82 324.92Q264.95 321.07 276.08 324.92L273.81 330.41Q264.95 327.66 256.1 330.41z"/><path d="M256.1 330.41L256.6 350.17M273.81 330.41L273.3 350.17M254.07 329.86L254.58 350.72M275.83 329.86L275.32 350.72"/><path d="M256.6 350.17Q264.95 347.98 273.3 350.17L275.07 356.21Q264.95 360.6 254.83 356.21z"/><path d="M254.83 308.45L254.32 323.27M275.07 308.45L275.58 323.27"/></g>
<g stroke="#8e8e8e" stroke-width="0.55" fill="none" stroke-linejoin="round"><path d="M299.25 306.8Q309.45 305.98 319.65 306.8Q321.44 307.35 321.44 310.09L320.93 323.27L322.96 326.56L321.44 328.21L321.69 350.72Q321.44 358.95 315.82 361.7Q309.45 362.8 303.07 361.7Q297.46 358.95 297.21 350.72L297.46 328.21L295.94 326.56L297.97 323.27L297.46 310.09Q297.46 307.35 299.25 306.8z"/><path d="M298.23 324.92Q309.45 321.07 320.67 324.92L318.38 330.41Q309.45 327.66 300.52 330.41z"/><path d="M300.52 330.41L301.03 350.17M318.38 330.41L317.87 350.17M298.49 329.86L299.0 350.72M320.41 329.86L319.9 350.72"/><path d="M301.03 350.17Q309.45 347.98 317.87 350.17L319.65 356.21Q309.45 360.6 299.25 356.21z"/><path d="M299.25 308.45L298.74 323.27M319.65 308.45L320.16 323.27"/></g>
<path d="M309.45 328L309.45 340" stroke="#555" stroke-width="0.6" />
<g stroke="#8e8e8e" stroke-width="0.55" fill="none" stroke-linejoin="round"><path d="M340.35 306.8Q350.55 305.98 360.75 306.8Q362.54 307.35 362.54 310.09L362.03 323.27L364.06 326.56L362.54 328.21L362.79 350.72Q362.54 358.95 356.93 361.7Q350.55 362.8 344.18 361.7Q338.56 358.95 338.31 350.72L338.56 328.21L337.04 326.56L339.07 323.27L338.56 310.09Q338.56 307.35 340.35 306.8z"/><path d="M339.33 324.92Q350.55 321.07 361.77 324.92L359.48 330.41Q350.55 327.66 341.62 330.41z"/><path d="M341.62 330.41L342.13 350.17M359.48 330.41L358.97 350.17M339.59 329.86L340.1 350.72M361.51 329.86L361.0 350.72"/><path d="M342.13 350.17Q350.55 347.98 358.97 350.17L360.75 356.21Q350.55 360.6 340.35 356.21z"/><path d="M340.35 308.45L339.84 323.27M360.75 308.45L361.26 323.27"/></g>
<path d="M350.55 328L350.55 340" stroke="#555" stroke-width="0.6" />
<g stroke="#8e8e8e" stroke-width="0.55" fill="none" stroke-linejoin="round"><path d="M391.45 306.8Q401.65 305.98 411.85 306.8Q413.63 307.35 413.63 310.09L413.12 323.27L415.16 326.56L413.63 328.21L413.89 350.72Q413.63 358.95 408.02 361.7Q401.65 362.8 395.27 361.7Q389.66 358.95 389.41 350.72L389.66 328.21L388.13 326.56L390.17 323.27L389.66 310.09Q389.66 307.35 391.45 306.8z"/><path d="M390.43 324.92Q401.65 321.07 412.87 324.92L410.57 330.41Q401.65 327.66 392.72 330.41z"/><path d="M392.72 330.41L393.23 350.17M410.57 330.41L410.06 350.17M390.69 329.86L391.19 350.72M412.61 329.86L412.1 350.72"/><path d="M393.23 350.17Q401.65 347.98 410.06 350.17L411.85 356.21Q401.65 360.6 391.45 356.21z"/><path d="M391.45 308.45L390.94 323.27M411.85 308.45L412.36 323.27"/></g>
<path d="M401.65 328L401.65 340" stroke="#555" stroke-width="0.6" />
<g stroke="#8e8e8e" stroke-width="0.55" fill="none" stroke-linejoin="round"><path d="M436.92 306.8Q447.0 305.98 457.08 306.8Q458.84 307.35 458.84 310.09L458.34 323.27L460.36 326.56L458.84 328.21L459.1 350.72Q458.84 358.95 453.3 361.7Q447.0 362.8 440.7 361.7Q435.16 358.95 434.9 350.72L435.16 328.21L433.64 326.56L435.66 323.27L435.16 310.09Q435.16 307.35 436.92 306.8z"/><path d="M435.91 324.92Q447.0 321.07 458.09 324.92L455.82 330.41Q447.0 327.66 438.18 330.41z"/><path d="M438.18 330.41L438.68 350.17M455.82 330.41L455.32 350.17M436.16 329.86L436.67 350.72M457.84 329.86L457.33 350.72"/><path d="M438.68 350.17Q447.0 347.98 455.32 350.17L457.08 356.21Q447.0 360.6 436.92 356.21z"/><path d="M436.92 308.45L436.42 323.27M457.08 308.45L457.58 323.27"/></g>
<path d="M447.0 328L447.0 340" stroke="#555" stroke-width="0.6" />
<g stroke="#666" stroke-width="0.65" fill="none" stroke-linejoin="round"><path d="M501.75 307.79Q506.65 306.61 511.55 307.79Q517.67 308.97 517.92 315.45L518.16 324.87L519.88 326.64L518.41 328.4L518.41 357.26Q518.16 364.92 512.77 366.1Q506.65 366.98 500.52 366.1Q495.13 364.92 494.89 357.26L494.89 328.4L493.42 326.64L495.13 324.87L495.38 315.45Q495.62 308.97 501.75 307.79z"/><path d="M496.85 324.87Q506.65 320.16 516.45 324.87L514.49 330.76Q506.65 327.81 498.81 330.76z"/><path d="M498.81 330.76L498.81 354.32M514.49 330.76L514.49 354.32M496.36 329.58L496.6 356.68M516.94 329.58L516.69 356.68"/><path d="M498.81 354.32Q506.65 352.55 514.49 354.32L515.96 360.21Q506.65 363.74 497.34 360.21z"/><path d="M499.3 310.14Q497.83 316.03 497.34 323.69M514.0 310.14Q515.47 316.03 515.96 323.69"/><path d="M500.52 310.73L512.77 310.73M501.75 313.09L511.55 313.09M499.3 333.12L514.0 333.12M500.28 336.65L500.28 351.96M513.02 336.65L513.02 351.96M497.83 333.7L497.83 353.14M515.47 333.7L515.47 353.14M496.85 357.85Q506.65 354.32 516.45 357.85M501.75 362.57L511.55 362.57M499.3 342.54L514.0 342.54" stroke="#555" stroke-width="0.500"/><path d="M496.6 331.94L496.6 342.54M516.69 331.94L516.69 342.54" stroke="#222" stroke-width="0.900"/></g>
<text x="226" y="460.3" font-size="2.8" fill="#999" text-anchor="start" font-weight="normal" font-family="Liberation Sans, sans-serif" >NOTA:</text>
<text x="221" y="468.700" font-size="4.900" fill="#444" font-weight="bold" font-family="Liberation Sans, sans-serif" textLength="206" lengthAdjust="spacingAndGlyphs">- ESTE DESENHO DESTINA-SE A SER CONFERIDO E DEVE SER VERIFICADO EM OBRA</text>
<circle cx="447.500" cy="466.500" r="8.500" stroke="#666" stroke-width="0.700" fill="none"/>
<path d="M447.5 466.5L452 456" stroke="#111" stroke-width="1.1" />
<text x="452.5" y="456" font-size="3.2" fill="#777" text-anchor="start" font-weight="normal" font-family="Liberation Sans, sans-serif" transform="rotate(22 452.500 456)">N</text>
<rect x="468.1" y="400.4" width="86.4" height="50.9" stroke="#222" stroke-width="0.9" fill="none" />
<rect x="468.1" y="454" width="86.4" height="27.7" stroke="#222" stroke-width="0.9" fill="none" />
<g fill="#a4a4a4"><circle cx="520.500" cy="402.700" r="2"/><rect x="518.300" y="405.600" width="4.600" height="19"/><path d="M524.300 406.500q3.300-5 6.200 0v18.200h-6.200z"/><path d="M531.900 406.500q3.300-5 6.200 0v18.200h-6.200z"/></g>
<text x="480.500" y="436.500" font-size="12.800" font-weight="bold" fill="#111" font-family="DejaVu Sans Condensed, DejaVu Sans, sans-serif" textLength="62.500" lengthAdjust="spacingAndGlyphs">Ideia Matriz</text>
<text x="482" y="442" font-size="4.700" font-weight="bold" fill="#111" font-family="DejaVu Sans Condensed, DejaVu Sans, sans-serif" textLength="60.500" lengthAdjust="spacingAndGlyphs">Arquitectura e Urbanismo</text>
<text x="471" y="446.700" font-size="2.900" fill="#111" stroke="#111" stroke-width="0.100" font-family="Liberation Sans, sans-serif" textLength="81" lengthAdjust="spacingAndGlyphs">Rua da Torre, 849 - TORRE PLAZA - Loja nº4 - 2750-054 Cascais</text>
<text x="471" y="449.600" font-size="2.900" fill="#111" stroke="#111" stroke-width="0.100" font-family="Liberation Sans, sans-serif" textLength="81" lengthAdjust="spacingAndGlyphs">Telf.: 214826110 Telm.: 917528701 - ideiamatriz@mail.telepac.pt</text>
<text x="471.3" y="457.8" font-size="3" fill="#555" text-anchor="start" font-family="Liberation Sans, sans-serif" font-weight="bold" textLength="15" lengthAdjust="spacingAndGlyphs">AUTOR:</text>
<text x="471.3" y="463.4" font-size="5" fill="#222" text-anchor="start" font-family="Liberation Sans, sans-serif" font-weight="normal" textLength="37.5" lengthAdjust="spacingAndGlyphs">LUÍS TEIXEIRA</text>
<text x="471.3" y="479.4" font-size="4.8" fill="#777" text-anchor="start" font-family="DejaVu Sans Light, DejaVu Sans, sans-serif" font-weight="normal" stroke="#777" stroke-width="0.140" textLength="46" lengthAdjust="spacingAndGlyphs">Mª Jesus Galban Regra</text>
<text x="528" y="479.4" font-size="4.8" fill="#777" text-anchor="start" font-family="DejaVu Sans Light, DejaVu Sans, sans-serif" font-weight="normal" stroke="#777" stroke-width="0.140" textLength="24" lengthAdjust="spacingAndGlyphs">1975 - 5</text>
<rect x="557.4" y="400.9" width="171.6" height="8.5" stroke="#222" stroke-width="0.9" fill="none" />
<path d="M586.3 400.9L586.3 409.4" stroke="#222" stroke-width="0.8" />
<path d="M699.9 400.9L699.9 409.4" stroke="#222" stroke-width="0.8" />
<text x="559.5" y="405.9" font-size="3" fill="#222" text-anchor="start" font-family="Liberation Sans, sans-serif" font-weight="bold" textLength="11.5" lengthAdjust="spacingAndGlyphs">REVISÃO:</text>
<text x="588.5" y="405.9" font-size="3" fill="#666" text-anchor="start" font-family="Liberation Sans, sans-serif" font-weight="bold" textLength="9" lengthAdjust="spacingAndGlyphs">DATA:</text>
<text x="703.5" y="405.9" font-size="3" fill="#555" text-anchor="start" font-family="Liberation Sans, sans-serif" font-weight="bold" textLength="4" lengthAdjust="spacingAndGlyphs">Nº:</text>
<rect x="557.4" y="412.3" width="171.6" height="11.6" stroke="#222" stroke-width="0.9" fill="none" />
<text x="560.6" y="416.8" font-size="3.7" fill="#111" text-anchor="start" font-family="Liberation Sans, sans-serif" font-weight="bold" textLength="16" lengthAdjust="spacingAndGlyphs">CLIENTE:</text>
<text x="642.6" y="418.6" font-size="5.9" fill="#000" text-anchor="middle" font-family="DejaVu Sans Light, DejaVu Sans, sans-serif" font-weight="normal" stroke="#000" stroke-width="0.140" textLength="56.4" lengthAdjust="spacingAndGlyphs">J. DIAS &amp; DIAS, S.A.</text>
<text x="643.5" y="423" font-size="3.9" fill="#222" text-anchor="middle" font-family="Liberation Sans, sans-serif" font-weight="normal" textLength="95" lengthAdjust="spacingAndGlyphs">AV. DR. FRANCISCO SÁ CARNEIRO, Nº5, 3ºD. QUELUZ</text>
<rect x="557.4" y="426.7" width="171.6" height="14.1" stroke="#222" stroke-width="0.9" fill="none" />
<text x="560.6" y="431.3" font-size="3.5" fill="#666" text-anchor="start" font-family="Liberation Sans, sans-serif" font-weight="bold" textLength="10" lengthAdjust="spacingAndGlyphs">OBRA:</text>
<text x="643.4" y="433.6" font-size="6.6" fill="#000" text-anchor="middle" font-family="DejaVu Sans Light, DejaVu Sans, sans-serif" font-weight="normal" stroke="#000" stroke-width="0.140" textLength="89.7" lengthAdjust="spacingAndGlyphs">AVENIDA ELIAS GARCIA - LOTE 6</text>
<text x="643.4" y="438.8" font-size="4.2" fill="#000" text-anchor="middle" font-family="DejaVu Sans Light, DejaVu Sans, sans-serif" font-weight="normal" stroke="#000" stroke-width="0.140" textLength="20" lengthAdjust="spacingAndGlyphs">AMADORA</text>
<rect x="557.4" y="444.6" width="171.6" height="6.8" stroke="#222" stroke-width="0.9" fill="none" />
<text x="559.5" y="448.9" font-size="3" fill="#222" text-anchor="start" font-family="Liberation Sans, sans-serif" font-weight="bold" textLength="7" lengthAdjust="spacingAndGlyphs">FASE:</text>
<text x="643.4" y="449.9" font-size="5" fill="#000" text-anchor="middle" font-family="DejaVu Sans Light, DejaVu Sans, sans-serif" font-weight="normal" stroke="#000" stroke-width="0.140" textLength="31.4" lengthAdjust="spacingAndGlyphs">ARQUITECTURA</text>
<rect x="557.4" y="454.5" width="140.0" height="16.9" stroke="#222" stroke-width="0.9" fill="none" />
<text x="560.6" y="459" font-size="3.3" fill="#222" text-anchor="start" font-family="Liberation Sans, sans-serif" font-weight="bold" textLength="6" lengthAdjust="spacingAndGlyphs">DES.:</text>
<text x="627" y="465.7" font-size="7" fill="#000" text-anchor="middle" font-family="DejaVu Sans Light, DejaVu Sans, sans-serif" font-weight="normal" stroke="#000" stroke-width="0.140" textLength="55.7" lengthAdjust="spacingAndGlyphs">PLANTA DO PISO -2</text>
<rect x="557.4" y="474.6" width="140.0" height="7.0" stroke="#222" stroke-width="0.9" fill="none" />
<path d="M593.3 474.6L593.3 481.6" stroke="#222" stroke-width="0.8" />
<path d="M629.2 474.6L629.2 481.6" stroke="#222" stroke-width="0.8" />
<path d="M665 474.6L665 481.6" stroke="#222" stroke-width="0.8" />
<text x="559" y="479.5" font-size="3.4" fill="#333" text-anchor="start" font-family="Liberation Sans, sans-serif" font-weight="bold" textLength="15" lengthAdjust="spacingAndGlyphs">Projecto nº</text>
<text x="596" y="479.5" font-size="3" fill="#333" text-anchor="start" font-family="Liberation Sans, sans-serif" font-weight="bold" textLength="6" lengthAdjust="spacingAndGlyphs">DATA:</text>
<text x="614" y="479.9" font-size="3.8" fill="#222" text-anchor="start" font-family="Liberation Sans, sans-serif" font-weight="normal" textLength="12" lengthAdjust="spacingAndGlyphs">FEV/08</text>
<text x="631.5" y="479.5" font-size="3" fill="#222" text-anchor="start" font-family="Liberation Sans, sans-serif" font-weight="bold" textLength="9" lengthAdjust="spacingAndGlyphs">ESCALA:</text>
<text x="653" y="479.9" font-size="3.6" fill="#aaa" text-anchor="start" font-family="DejaVu Sans Light, DejaVu Sans, sans-serif" font-weight="normal" stroke="#aaa" stroke-width="0.140" textLength="9.5" lengthAdjust="spacingAndGlyphs">1/100</text>
<text x="667" y="479.5" font-size="3" fill="#555" text-anchor="start" font-family="Liberation Sans, sans-serif" font-weight="bold" textLength="14" lengthAdjust="spacingAndGlyphs">FICHEIRO:</text>
<rect x="699.5" y="454.5" width="29.5" height="27.1" stroke="#222" stroke-width="0.9" fill="none" />
<text x="714.300" y="473.500" font-size="15.800" fill="#777" text-anchor="middle" font-family="DejaVu Sans Light, DejaVu Sans, sans-serif" textLength="7" lengthAdjust="spacingAndGlyphs">3</text>
</svg>
<!--PAGE_END-->

<div class="abs" style="left:8px;top:156px;width:26.500px;height:192px;background:#2b2b2b;border:1px solid #474747;border-radius:4px"></div>
<div class="abs" style="left:10.500px;top:159px;width:21.500px;height:2px;background:#5c5c5c;border-radius:1px"></div>
<div class="abs" style="left:10.500px;top:167px;width:21.500px;height:20.500px;background:#1b73e8;border-radius:2px"></div>
<svg style="left:0;top:-54px" width="50" height="506" viewBox="0 0 50 506">
 <path d="M17.800 225.500v9.600l2.400-2.200 1.700 3.700 1.600-.7-1.700-3.600h3.200z" fill="#fff"/>
 <g fill="#fff"><path d="M30 236.500v3.500h-3.500z"/></g>
 <g fill="#cfcfcf"><path d="M30 263.500v3.200h-3.200zM30 289.500v3.200h-3.200zM30 315.500v3.200h-3.200zM30 341.500v3.200h-3.200zM30 367.500v3.200h-3.200z"/></g>
 <g stroke="#dadada" stroke-width="1.100" fill="none" stroke-linecap="round" stroke-linejoin="round">
  <path d="M20.300 252.800a4.900 4.900 0 1 0 0 9.800h4.700v-4.900a4.800 4.800 0 0 0-4.700-4.900z"/>
  <path d="M18.200 256.500h4.400M18.200 258.800h3.200" stroke-width="0.900"/>
  <path d="M16.600 288.600l1-2.800 6.600-7 1.900 1.800-6.600 7zM17 290.800h8.500" />
  <path d="M24.500 306.600c-2.500-1.300-8.300-.3-8.800 3.300-.4 2.700 3.600 3.300 5.800 2.300 2-.9 2.400-2.800.6-3.100-1.300-.2-2.600.6-2.800 1.900"/>
  <path d="M15 330.500h11.800v11.800H15z" stroke-dasharray="1.300 1" stroke-width="1"/>
  <path d="M18.500 339.800l2.400-6.800 2.400 6.800M19.300 337.600h3.200" stroke-width="1"/>
  <path d="M15.500 366.500c.8-3.500 3.400-7.200 5.600-8.600l3 3.200c-1.600 2.300-4.600 4.400-8.600 5.400zM17 365l3-3M21.800 365.500c1.200-1.300 2-1 2.600 0 .5.800 1.300.6 1.800 0"/>
 </g>
 <g fill="#bdbdbd"><circle cx="17" cy="388.700" r="0.900"/><circle cx="20.600" cy="388.700" r="0.900"/><circle cx="24.200" cy="388.700" r="0.900"/></g>
</svg>


<div class="abs" style="left:857.500px;top:0;width:10.500px;height:432px;background:#181818"></div>
<div class="abs" style="left:858px;top:66px;width:9.500px;height:29px;background:#4e4e4e"></div>
<div class="abs" style="left:868px;top:0;width:32px;height:432px;background:#323232"></div>
<svg style="left:840px;top:-54px" width="60" height="506" viewBox="840 0 60 506">
 <g stroke="#9a9a9a" stroke-width="1.100" fill="none" stroke-linecap="round" stroke-linejoin="round">
  <path d="M860.300 61.800l2.500-2.500 2.500 2.500"/><path d="M860.300 479.600l2.500 2.500 2.500-2.500"/>
 </g>
 <path d="M876 86.500h16M876 391.200h16" stroke="#4c4c4c" stroke-width="1"/>
 <g stroke="#c9c4f6" stroke-width="1.100" fill="none" stroke-linejoin="round">
  <path d="M886 66.200h-7a1 1 0 0 0-1 1v8a1 1 0 0 0 1 1h9a1 1 0 0 0 1-1v-5.500"/>
  <path d="M880 69.700h3.500M880 72.700h2M884.500 72.700h2.500" />
 </g>
 <path d="M888.300 63.500l.7 1.700 1.700.7-1.700.7-.7 1.700-.7-1.700-1.700-.7 1.700-.7z" fill="#c9c4f6"/>
 <g stroke="#dcdcdc" stroke-width="1.100" fill="none" stroke-linecap="round" stroke-linejoin="round">
  <path d="M884.500 95.200a4.600 4.600 0 1 0 0 9.200h4.300v-4.600a4.500 4.500 0 0 0-4.300-4.600z"/>
  <path d="M882.600 98.600h3.800M882.600 100.800h2.600" stroke-width="0.900"/>
  <path d="M880.300 97.500a4.800 4.800 0 0 0 3 8.500h3"/>
  <path d="M879.300 120h6.400v10.800l-3.200-2.500-3.200 2.500z"/>
  <path d="M887.800 122h2.400M887.800 124.500h2.400M887.800 127h2.400" stroke-width="0.900"/>
  <path d="M882.300 148h3.700l2.400 2.400v6.300h-6.100z"/>
  <path d="M882.300 155.200h-2.600v-9.600h5.300l1 1"/>
  <path d="M880.500 359.300l3.500-3.400 3.500 3.400" stroke-width="1.400"/>
  <path d="M880.500 378l3.500 3.400 3.500-3.400" stroke-width="1.400"/>
  <path d="M888.200 402a4.700 4.700 0 1 0 .5 4.200M888.800 399.300v3.200h-3.200" stroke-width="1.300"/>
  <path d="M879.800 421.800h5.600l2.600 2.600v8.300h-8.200z"/><path d="M882.200 424.500l3 2-1.500 1.500 2.500 2" stroke-width="0.900"/>
  <circle cx="883" cy="450" r="3.900"/><path d="M885.900 452.900l3.300 3.300" stroke-width="1.400"/><path d="M881.200 450h3.600M883 448.200v3.600" stroke-width="0.900"/>
  <circle cx="883" cy="473" r="3.900"/><path d="M885.900 475.900l3.300 3.300" stroke-width="1.400"/><path d="M881.200 473h3.600" stroke-width="0.900"/>
 </g>
 <path d="M892.500 431.500v3h-3z" fill="#cfcfcf"/>
</svg>
<div class="abs" style="left:873.500px;top:246px;width:21px;height:21px;background:#1d1d1d;border:1px solid #5a5a5a;border-radius:3px"></div>
<div class="abs" style="left:873.500px;top:251px;width:21px;text-align:center;font-size:9.500px;line-height:11px;color:#f0f0f0">3</div>
<div class="abs" style="left:873.500px;top:273.500px;width:22px;text-align:center;font-size:9.500px;line-height:11px;color:#e8e8e8">14</div>

</div>
<div id="taskbar">

<div class="abs" style="left:0;top:0;width:900px;height:20px;background:linear-gradient(90deg,#1b2732 0%,#1c2935 25%,#1f2e39 50%,#22323e 70%,#1b2b41 85%,#1b2e4a 100%)"></div>
<div class="abs" style="left:0;top:0;width:24px;height:20px;background:#141d2a"></div>
<div class="abs" style="left:24px;top:0;width:169.500px;height:20px;background:#3a3a3a;border-top:1px solid #4a4a4a"></div>
<div class="abs" style="left:561.500px;top:0;width:23.500px;height:20px;background:#4a5766"></div>
<svg style="left:0;top:0" width="900" height="20" viewBox="0 0 900 20">
 <g fill="#fff"><path d="M6.200 5.900l4.500-.6v4.400H6.200zM11.300 5.200l5.900-.8v5.300h-5.900zM6.200 10.300h4.500v4.400l-4.500-.6zM11.300 10.300h5.900v5.300l-5.900-.8z"/></g>
 <circle cx="38.200" cy="8.700" r="3.300" stroke="#e0e0e0" stroke-width="1.100" fill="none"/><path d="M35.800 11.200l-3.600 3.700" stroke="#e0e0e0" stroke-width="1.200" stroke-linecap="round"/>
 <g fill="#8fb6dc"><rect x="198.500" y="18.500" width="18" height="1.500"/><rect x="247" y="18.500" width="18" height="1.500"/><rect x="300" y="18.500" width="13.500" height="1.500"/><rect x="320" y="18.500" width="18.500" height="1.500"/><rect x="393.500" y="18.500" width="18" height="1.500"/><rect x="466" y="18.500" width="18" height="1.500"/><rect x="515" y="18.500" width="18.500" height="1.500"/><rect x="539.500" y="18.500" width="18" height="1.500"/><rect x="561.500" y="18.500" width="23.500" height="1.500"/></g>
 <!-- folder -->
 <path d="M202 5.500h4l1 1.200h6.300v8.300H202z" fill="#f2c84b"/><path d="M202 8.300h11.300v6.700H202z" fill="#f7dc7c"/><path d="M204.500 11h6.300v4h-6.300z" fill="#5aa0d8"/>
 <g transform="translate(231.7 10) scale(0.94)"><circle r="5.600" fill="#dd4b3e"/><path d="M0 0L-4.850 -2.800A5.600 5.600 0 0 0 0 5.600z" fill="#1e9c57" transform="rotate(0)"/><path d="M0 0L-4.850 -2.800A5.600 5.600 0 0 0 -0.100 5.600L2.400 1.400z" fill="#2aa55c"/><path d="M0 0L0 5.600A5.600 5.600 0 0 0 4.850 -2.800z" fill="#f5c33b"/><path d="M-4.850 -2.800A5.600 5.600 0 0 1 4.850 -2.800L0 -2.800z" fill="#dd4b3e"/><circle r="2.700" fill="#fff"/><circle r="2.100" fill="#4a8af4"/><circle cx="3" cy="3.500" r="2" fill="#3a2a20"/></g><g transform="translate(256.2 10) scale(0.94)"><circle r="5.600" fill="#dd4b3e"/><path d="M0 0L-4.850 -2.800A5.600 5.600 0 0 0 0 5.600z" fill="#1e9c57" transform="rotate(0)"/><path d="M0 0L-4.850 -2.800A5.600 5.600 0 0 0 -0.100 5.600L2.400 1.400z" fill="#2aa55c"/><path d="M0 0L0 5.600A5.600 5.600 0 0 0 4.850 -2.800z" fill="#f5c33b"/><path d="M-4.850 -2.800A5.600 5.600 0 0 1 4.850 -2.800L0 -2.800z" fill="#dd4b3e"/><circle r="2.700" fill="#fff"/><circle r="2.100" fill="#4a8af4"/><circle cx="3" cy="3.500" r="2" fill="#3a2a20"/></g><g transform="translate(280.3 10) scale(0.94)"><circle r="5.600" fill="#dd4b3e"/><path d="M0 0L-4.850 -2.800A5.600 5.600 0 0 0 0 5.600z" fill="#1e9c57" transform="rotate(0)"/><path d="M0 0L-4.850 -2.800A5.600 5.600 0 0 0 -0.100 5.600L2.400 1.400z" fill="#2aa55c"/><path d="M0 0L0 5.600A5.600 5.600 0 0 0 4.850 -2.800z" fill="#f5c33b"/><path d="M-4.850 -2.800A5.600 5.600 0 0 1 4.850 -2.800L0 -2.800z" fill="#dd4b3e"/><circle r="2.700" fill="#fff"/><circle r="2.100" fill="#4a8af4"/><circle cx="3" cy="3.500" r="2" fill="#3a2a20"/></g>
 <!-- outlook -->
 <rect x="303" y="4.500" width="8.500" height="11" rx="1" fill="#2a8ee0"/><rect x="299.500" y="6.500" width="7.500" height="7.500" rx="1" fill="#0f6cbd"/><text x="303.250" y="12.600" font-size="6.500" font-weight="bold" fill="#fff" text-anchor="middle" font-family="Liberation Sans, sans-serif">O</text>
 <!-- word -->
 <rect x="327" y="4.500" width="9" height="11" rx="1" fill="#3d8ae6"/><rect x="324" y="6.500" width="7.500" height="7.500" rx="1" fill="#185abd"/><text x="327.750" y="12.500" font-size="6" font-weight="bold" fill="#fff" text-anchor="middle" font-family="Liberation Sans, sans-serif">W</text>
 <!-- scanner -->
 <rect x="347.500" y="4.500" width="12" height="11.500" rx="1.500" fill="#3a46c4"/><path d="M350 13l2-5h4l1.500 5z" stroke="#fff" stroke-width="1" fill="none"/><path d="M349.500 13.500h8.500" stroke="#fff" stroke-width="1.200"/>
 <!-- CS -->
 <rect x="372" y="4" width="12.500" height="12.500" rx="1" fill="#1c2630"/><text x="378.200" y="12" font-size="6.500" font-weight="bold" fill="#fff" text-anchor="middle" font-family="Liberation Sans, sans-serif">CS</text><rect x="373.500" y="13.500" width="9.500" height="1.200" fill="#3ec28f"/>
 <!-- calculator -->
 <rect x="398.500" y="4" width="8.500" height="12.500" rx="0.800" fill="#6f7f8c"/><rect x="399.700" y="5.300" width="6" height="2.500" fill="#b9c6cf"/><g fill="#d4dde3"><rect x="399.700" y="9" width="1.500" height="1.500"/><rect x="402" y="9" width="1.500" height="1.500"/><rect x="404.300" y="9" width="1.500" height="1.500"/><rect x="399.700" y="11.500" width="1.500" height="1.500"/><rect x="402" y="11.500" width="1.500" height="1.500"/><rect x="404.300" y="11.500" width="1.500" height="3.500"/><rect x="399.700" y="13.800" width="3.800" height="1.300"/></g>
 <!-- clipchamp -->
 <path d="M421.500 8.500l10-2.500.8 2.500v7h-10.800z" fill="#b05ce0"/><path d="M421.500 9.500h10.800v6h-10.800z" fill="#d07af0"/><path d="M421.500 8.500l10-2.800.5 1.800-10 2.800z" fill="#8a3fc8"/>
 <!-- diamond -->
 <path d="M451 4l6.500 6.200-6.500 6.200-6.500-6.200z" fill="#6d4fe0"/><path d="M449.500 7.800l4 2.400-4 2.400z" fill="#fff"/>
 <!-- whatsapp -->
 <circle cx="475.500" cy="10" r="5.500" stroke="#35c65a" stroke-width="1.400" fill="#1d3a32"/><path d="M470.300 15.500l1-3" stroke="#35c65a" stroke-width="1.400"/><path d="M473.300 7.700c0 2.500 1.800 4.400 4.400 4.600l.8-1.200-1.300-.8-.7.500c-.8-.3-1.500-1-1.800-1.800l.5-.7-.7-1.300z" fill="#35c65a"/>
 <!-- teams -->
 <circle cx="503.500" cy="6.500" r="1.800" fill="#5b64c9"/><circle cx="499.500" cy="5.800" r="2.300" fill="#7b83eb"/><rect x="497" y="8.300" width="9" height="7.500" rx="2" fill="#5059c9"/><rect x="494.500" y="7.500" width="7" height="7" rx="1" fill="#4b53bc"/><text x="498" y="13.300" font-size="6" font-weight="bold" fill="#fff" text-anchor="middle" font-family="Liberation Sans, sans-serif">T</text>
 <!-- spotify -->
 <circle cx="524.300" cy="10" r="5.800" fill="#1ed45f"/><path d="M521 8.300c2.300-.7 4.800-.5 6.800.6M521.300 10.300c2-.6 4-.4 5.700.5M521.700 12.200c1.600-.4 3.100-.3 4.500.4" stroke="#15301f" stroke-width="0.900" fill="none" stroke-linecap="round"/>
 <!-- photos -->
 <rect x="542.500" y="4.500" width="12" height="11.500" rx="1.500" fill="#2f8fe8"/><path d="M542.500 15l4.200-5 3 3.400 1.800-2 3 3.600v1h-12z" fill="#a8dcff"/><circle cx="551.500" cy="7.500" r="1.200" fill="#d8f0ff"/>
 <!-- acrobat -->
 <rect x="568" y="4.500" width="10.500" height="11" rx="1.500" fill="#c4161c"/><path d="M570 13.500c1.800-1.200 3-3.800 3.200-6.300.1-.9 1-.8.900.1-.1 2 1.500 4 3.500 4.300.8.100.8.900-.1.900-2.200-.1-5 .3-7 1.600-.7.400-1.100-.2-.5-.6z" stroke="#fff" stroke-width="1.150" fill="none" stroke-linejoin="round"/>
 <!-- tray -->
 <path d="M812.300 11.500l3-3 3 3" stroke="#f0f0f0" stroke-width="1.200" fill="none"/>
 <g stroke="#f0f0f0" stroke-width="1" fill="none"><rect x="828.500" y="7.500" width="7" height="5.500" rx="0.500"/><path d="M835.500 9v2.500h1.200V9zM828.500 9.500h-1.500v-2"/><circle cx="827" cy="7" r="0.800"/></g>
 <path d="M847.300 4.500c1.500 1 3 1.300 4.500 1.300v4.400c0 2.500-2 4.300-4.500 5.300-2.500-1-4.500-2.800-4.500-5.300V5.800c1.500 0 3-.3 4.500-1.300z" fill="#fff"/><path d="M847.300 4.500v11M842.800 9.800h9" stroke="#1c2f46" stroke-width="0.800"/><circle cx="850.500" cy="13.800" r="2.300" fill="#1fb25a"/><path d="M849.400 13.800l.8.900 1.500-1.600" stroke="#fff" stroke-width="0.700" fill="none"/>
 <g stroke="#f0f0f0" fill="none" stroke-width="1"><path d="M859.500 14.500a7.500 7.500 0 0 1 7.500-7.500"/><path d="M861.800 14.500a5.200 5.200 0 0 1 5.200-5.200" stroke="#bcc3cc"/><path d="M864.200 14.500a2.800 2.800 0 0 1 2.800-2.800" stroke="#bcc3cc"/></g><circle cx="866.300" cy="14" r="1" fill="#f0f0f0"/>
 <path d="M897.600 0v20" stroke="#7f8894" stroke-width="0.700"/>
</svg>
<div class="abs" style="left:50.500px;top:4.500px;font-size:9.6px;line-height:11px;color:#dedede;white-space:nowrap;letter-spacing:-0.4px">Pesquisa</div>
<div class="abs" style="left:875.3px;top:5.2px;font-size:8.1px;line-height:11px;color:#f6f6f6;white-space:nowrap;letter-spacing:-0.6px">14:51</div>

</div>
</body></html>
